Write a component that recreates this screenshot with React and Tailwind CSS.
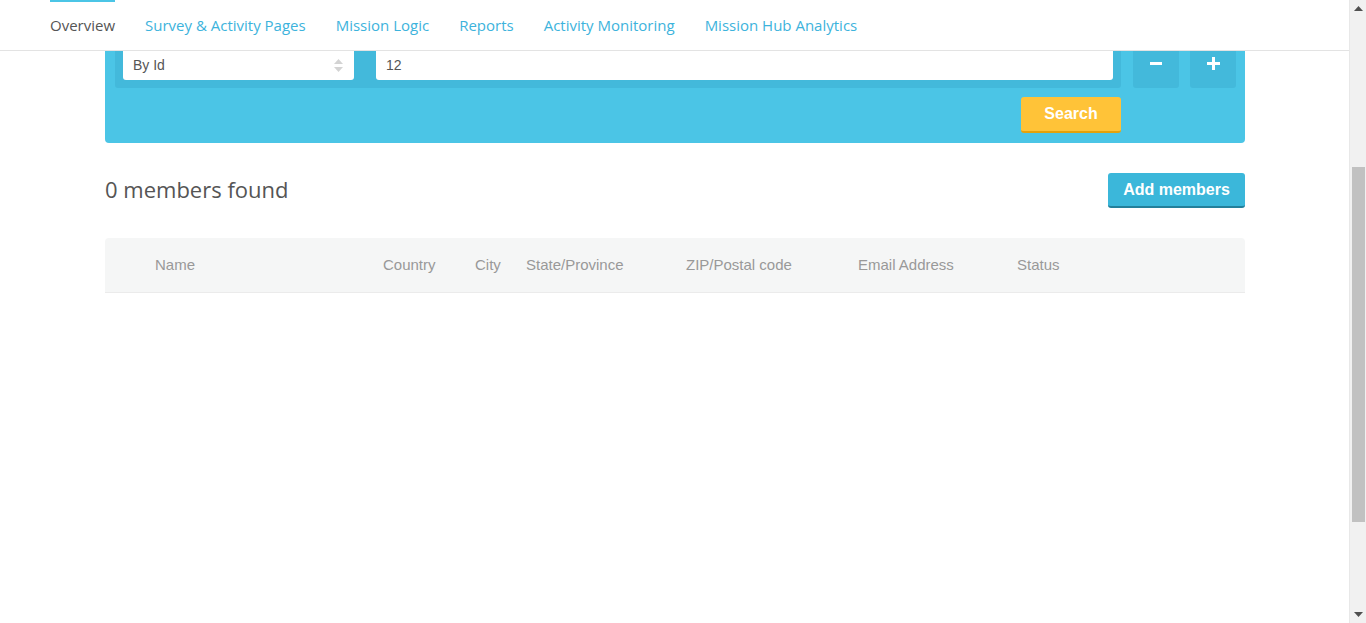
import React from "react";

const tabs = [
  "Overview",
  "Survey & Activity Pages",
  "Mission Logic",
  "Reports",
  "Activity Monitoring",
  "Mission Hub Analytics",
];

const columns = [
  { label: "Name", w: "w-[228px]" },
  { label: "Country", w: "w-[92px]" },
  { label: "City", w: "w-[51px]" },
  { label: "State/Province", w: "w-[160px]" },
  { label: "ZIP/Postal code", w: "w-[172px]" },
  { label: "Email Address", w: "w-[159px]" },
  { label: "Status", w: "" },
];

const Scrollbar = () => (
  <div className="w-[17px] h-[623px] bg-[#f1f1f1] border-l border-[#e8e8e8] flex flex-col items-center shrink-0">
    <div className="h-[17px] flex items-center justify-center">
      <svg width="9" height="5" viewBox="0 0 9 5">
        <path d="M0 5 L4.5 0 L9 5 Z" fill="#505050" />
      </svg>
    </div>
    <div className="h-[150px]" />
    <div className="w-[13px] h-[355px] bg-[#c1c1c1]" />
    <div className="flex-1" />
    <div className="h-[17px] flex items-center justify-center">
      <svg width="9" height="5" viewBox="0 0 9 5">
        <path d="M0 0 L4.5 5 L9 0 Z" fill="#505050" />
      </svg>
    </div>
  </div>
);

const App = () => {
  return (
    <div className="flex w-[1366px] h-[623px] overflow-hidden bg-white">
      <div className="flex-1 flex flex-col">
        {/* top tabs */}
        <div className="h-[51px] border-b border-[#e3e3e3] flex pl-[50px] gap-[30px] font-['Open_Sans',sans-serif] text-[15px] shrink-0">
          {tabs.map((t, i) => (
            <div
              key={t}
              className={`h-full flex items-center pt-px border-t-2 ${
                i === 0
                  ? "text-[#555] border-[#4bc5e6]"
                  : "text-[#3db3dc] border-transparent"
              }`}
            >
              <span className="-mt-[2px]">{t}</span>
            </div>
          ))}
        </div>

        <div className="w-[1140px] ml-[105px] font-['Liberation_Sans',Arial,sans-serif]">
          {/* search panel */}
          <div className="bg-[#4bc5e6] rounded-b-[4px] pl-[10px] pr-[9px] pb-[10px]">
            <div className="flex">
              <div className="flex-1 bg-[#43b9db] rounded-b-[3px] px-[8px] pb-[8px] flex gap-[22px]">
                <div className="w-[231px] h-[29px] bg-white rounded-b-[3px] flex items-center justify-between pl-[10px] pr-[11px] text-[14px] text-[#555]">
                  <span>By Id</span>
                  <svg width="9" height="13" viewBox="0 0 9 13">
                    <path d="M0 5 L4.5 0 L9 5 Z" fill="#d3d3d3" />
                    <path d="M0 8 L4.5 13 L9 8 Z" fill="#d3d3d3" />
                  </svg>
                </div>
                <div className="flex-1 h-[29px] bg-white rounded-b-[3px] flex items-center pl-[10px] text-[14px] text-[#555]">
                  12
                </div>
              </div>
              <div className="flex gap-[11px] ml-[12px]">
                <div className="w-[46px] h-[37px] bg-[#43b9db] rounded-b-[3px] flex items-center justify-center">
                  <svg width="12" height="3" viewBox="0 0 12 3" className="-mt-[12px]">
                    <rect width="12" height="3" fill="#fff" />
                  </svg>
                </div>
                <div className="w-[46px] h-[37px] bg-[#43b9db] rounded-b-[3px] flex items-center justify-center">
                  <svg width="13" height="13" viewBox="0 0 13 13" className="-mt-[12px]">
                    <rect x="5" width="3" height="13" fill="#fff" />
                    <rect y="5" width="13" height="3" fill="#fff" />
                  </svg>
                </div>
              </div>
            </div>
            <div className="flex justify-end pr-[115px] pt-[9px]">
              <button className="w-[100px] h-[36px] bg-[#ffc338] border-b-2 border-[#e3a20c] rounded-[3px] text-white font-bold text-[16px]">
                Search
              </button>
            </div>
          </div>

          {/* results heading */}
          <div className="flex items-center justify-between mt-[30px]">
            <h2 className="font-['Open_Sans',sans-serif] text-[22px] text-[#555] leading-none -mt-[3px]">
              0 members found
            </h2>
            <button className="w-[137px] h-[35px] bg-[#3bb7da] border-b-2 border-[#23809b] rounded-[3px] text-white font-bold text-[16px]">
              Add members
            </button>
          </div>

          {/* table header */}
          <div className="mt-[30px] h-[55px] bg-[#f5f6f6] border-b border-[#ebebeb] rounded-t-[4px] flex items-center pl-[50px] text-[15px] text-[#999]">
            {columns.map((c) => (
              <div key={c.label} className={c.w}>
                {c.label}
              </div>
            ))}
          </div>
        </div>
      </div>
      <Scrollbar />
    </div>
  );
};

export default App;
